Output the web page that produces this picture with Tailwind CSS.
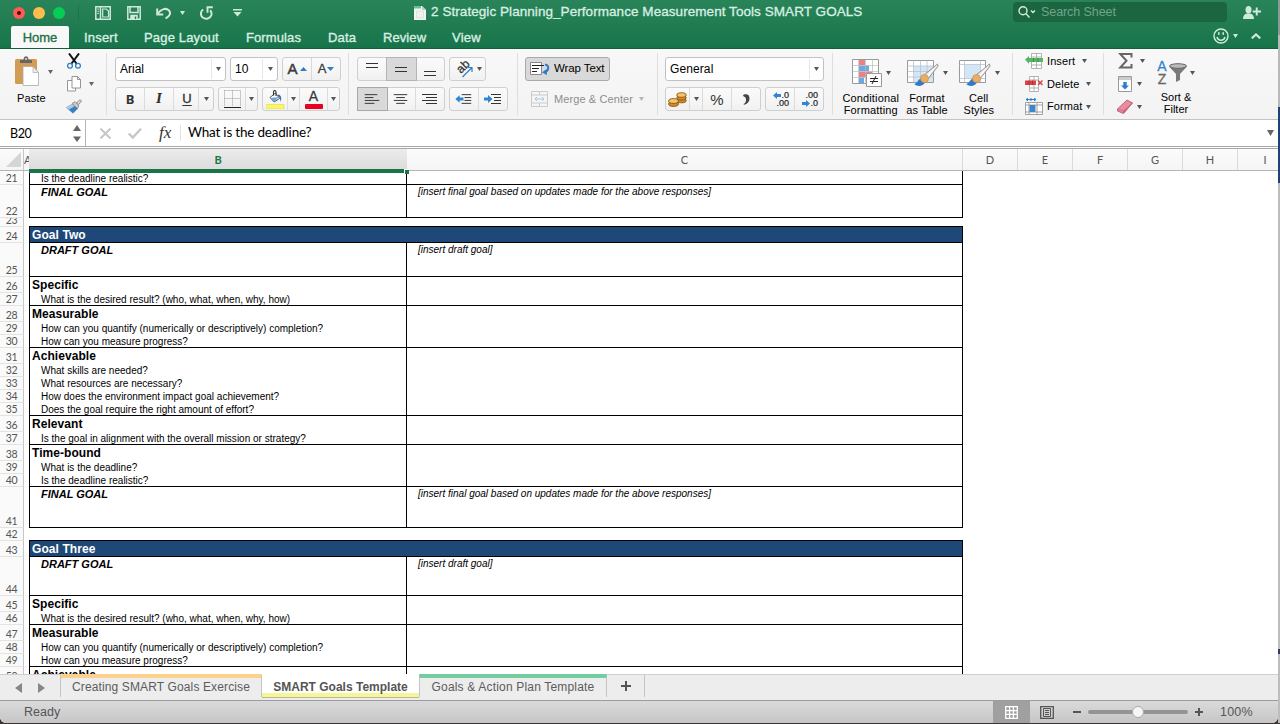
<!DOCTYPE html>
<html lang="en">
<head>
<meta charset="utf-8">
<title>SMART Goals workbook</title>
<script src="https://cdn.jsdelivr.net/npm/@tailwindcss/browser@4"></script>
</head>
<body class="w-[1280px] h-[724px] overflow-hidden bg-[#3a3434] font-['Liberation_Sans',sans-serif] whitespace-nowrap">
<svg width="0" height="0" class="absolute">
  <symbol id="caret" viewBox="0 0 6 5" preserveAspectRatio="none"><path d="M0 0h6L3 5z"/></symbol>
  <symbol id="brush" viewBox="0 0 26 24">
    <path d="M24.500 1L10.500 12.500l4 4L25 3.200z" fill="#e4e4e4" stroke="#8b8b8b" stroke-width=".9"/>
    <path d="M24.500 1.500L12 14l2 2z" fill="#fafafa"/>
    <path d="M1 21c3 0 3.500-4 6.500-5.500l4.500 4C10 23.500 4.500 24 1 21z" fill="#2e7cc9"/>
    <circle cx="11.500" cy="15.500" r="4" fill="#e9ae66" stroke="#c78a43" stroke-width=".6"/>
  </symbol>
</svg>
<div class="flex w-[1280px] h-[723px]">
<div class="w-[1278px] h-[723px] flex flex-col bg-white rounded-b-md overflow-hidden">

  <!-- Title bar -->
  <header class="h-[49px] shrink-0 bg-linear-to-b from-[#2a8459] to-[#17744a] border-b border-[#0d6239] flex flex-col text-[#d9efe3]">
    <div class="h-[26px] flex items-center relative">
      <div class="flex gap-2 pl-[13px] w-[79px] box-border border-r border-[#217249] h-4 items-center">
        <span class="size-3 rounded-full bg-[#fc5b57] shrink-0 flex items-center justify-center"><i class="size-1 rounded-full bg-[#5a0505]"></i></span>
        <span class="size-3 rounded-full bg-[#fdbc4b] shrink-0"></span>
        <span class="size-3 rounded-full bg-[#05cd54] shrink-0"></span>
      </div>
      <svg class="ml-4 w-4 h-[14px]" viewBox="0 0 16 14" fill="none" stroke="#cfe9db" stroke-width="1.500"><path d="M.8.800h14.400v12.400H.800zM5.500 1v12"/><path d="M2.300 3h1.700M2.300 5.200h1.700M2.300 7.400h1.700" stroke-width="1"/><path d="M7.700 11V3h3.500L13.500 5v6z" stroke-width="1.200"/></svg>
      <svg class="ml-4 w-[14px] h-[14px]" viewBox="0 0 14 14" fill="none" stroke="#cfe9db" stroke-width="1.500"><path d="M.8.800h12.400v12.400H.800zM3 1v5.500h8V1"/><path d="M4 13V9.500h6V13" fill="#cfe9db"/><path d="M8.500 10.500V13" stroke="#25794f" stroke-width="1.300"/></svg>
      <svg class="ml-[15px] w-4 h-3" viewBox="0 0 16 12" fill="none" stroke="#cfe9db" stroke-width="2"><path d="M1.200 1.500v6h6"/><path d="M1.500 7C5.500 1.500 10 .8 12.800 3.200 15.500 6 13.500 9.500 9.500 11.500"/></svg>
      <svg class="ml-2 w-[5px] h-1 fill-[#cfe9db]"><use href="#caret"/></svg>
      <svg class="ml-[15px] w-[13px] h-[14px]" viewBox="0 0 13 14" fill="none" stroke="#cfe9db" stroke-width="2"><path d="M3.200 3.500C.2 5.300.3 9.500 2.700 11.500c3 2.300 7.600 1.200 8.700-2.500.4-1.800 0-3.400-1.200-4.700"/><path d="M12.800 1.200H7.500v5.500" stroke-width="1.900"/></svg>
      <svg class="ml-5 w-[9px] h-[8px] fill-[#cfe9db]" viewBox="0 0 9 8"><path d="M0 0h9v1.500H0zM.5 3h8L4.500 7.500z"/></svg>
      <svg class="ml-[172px] w-3 h-[14px]" viewBox="0 0 12 14"><path d="M0 0h8l4 4v10H0z" fill="#f3f8f5"/><path d="M0 0h7v2.500H0z" fill="#63c394"/><path d="M2.500 5h7v7h-7z" stroke="#d5ddd8" stroke-width=".7" fill="#eef2f0"/><path d="M8 0v4h4z" fill="#b9cdc2"/></svg>
      <h1 class="ml-[5px] w-[435px] text-[13.500px] tracking-[0.060px] [-webkit-text-stroke:0.300px]">2 Strategic Planning_Performance Measurement Tools SMART GOALS</h1>
      <div class="ml-[147px] mt-[-1px] w-[214px] h-5 rounded bg-[#1c6541] flex items-center">
        <svg class="ml-[5px] w-[18px] h-3" viewBox="0 0 18 12" fill="none" stroke="#d7ecdf" stroke-width="1.400"><circle cx="5" cy="4.800" r="4"/><path d="M8 7.800l3.500 3.700M13 4.500l2 2 2-2"/></svg>
        <span class="ml-[5px] mt-px text-[12.500px] tracking-[-0.080px] text-[#6fa58a]">Search Sheet</span>
      </div>
      <svg class="ml-4 w-[18px] h-[13px]" viewBox="0 0 18 13" fill="#cfe9db"><ellipse cx="5.500" cy="3.700" rx="3" ry="3.700"/><path d="M0 13c0-3.500 1.500-5 4-5.500h3c2.500.5 4 2 4 5.500zM12.800 1.500h1.900v3H18v1.900h-3.300v3h-1.900v-3H9.800V4.500h3z"/></svg>
    </div>
    <nav class="h-[23px] flex text-[13px] items-center leading-[22px] pt-px [-webkit-text-stroke:0.350px]">
      <span class="ml-[11px] w-[58px] h-[22px] flex items-center justify-center bg-[#f8f8f8] text-[#1c7045] rounded-t-xs pt-px">Home</span>
      <span class="ml-[15px] w-[60px] pt-[2px] tracking-[0.200px]">Insert</span>
      <span class="w-[102px] pt-[2px] tracking-[0.170px]">Page Layout</span>
      <span class="w-[82px] pt-[2px] tracking-[0.100px]">Formulas</span>
      <span class="w-[55px] pt-[2px] tracking-[0.150px]">Data</span>
      <span class="w-[69px] pt-[2px] tracking-[0.080px]">Review</span>
      <span class="w-[54px] pt-[2px] tracking-[0.200px]">View</span>
      <svg class="ml-[707px] -mt-[3px] w-4 h-4" viewBox="0 0 16 16" fill="none" stroke="#d3ebdd" stroke-width="1.400"><circle cx="8" cy="8" r="7"/><path d="M4 9c1 4.300 7 4.300 8 0"/><path d="M5.800 4.300v2.500M10.200 4.300v2.500" stroke-width="1.600"/></svg>
      <svg class="ml-1 -mt-[3px] w-[5px] h-1 fill-[#cfe9db]"><use href="#caret"/></svg>
      <svg class="ml-[13px] -mt-[3px] w-[10px] h-[6px]" viewBox="0 0 10 6" fill="none" stroke="#cfe9db" stroke-width="2.200"><path d="M.8 5.300L5 1.500l4.200 3.800"/></svg>
    </nav>
  </header>

  <!-- Ribbon -->
  <section class="h-[71px] shrink-0 flex bg-linear-to-b from-[#f8f8f8] to-[#f3f3f3] border-b border-[#c3c3c3] text-[11px] text-black">
    <div class="w-[106px] flex shrink-0">
      <div class="w-[64px] flex flex-col">
        <div class="flex items-center mt-[7px] pl-[15px]">
          <svg class="w-6 h-[30px] shrink-0" viewBox="0 0 24 30"><rect y="3" width="22" height="25" rx="1.500" fill="#d39c55"/><path d="M5 7V4h3.500C8.500 1 10 .3 11 .3S13.500 1 13.500 4H17v3z" fill="#666"/><circle cx="11" cy="3" r="1" fill="#ddd"/><path d="M8 10.500h10l5.500 6V29.500H8z" fill="#fff" stroke="#aaa" stroke-width=".8"/><path d="M18 10.500v6h5.500z" fill="#eee" stroke="#aaa" stroke-width=".7"/></svg>
          <svg class="ml-[9px] mt-[2px] w-[5px] h-1 fill-[#666]"><use href="#caret"/></svg>
        </div>
        <span class="mt-[4px] ml-[17px] tracking-[0.100px]">Paste</span>
      </div>
      <div class="flex flex-col pl-[3px]">
        <svg class="mt-[4px] w-[14px] h-4" viewBox="0 0 14 16" fill="none"><path d="M2 .5L9.800 11M12 .5L4.200 11" stroke="#111" stroke-width="2"/><circle cx="3" cy="12.800" r="2.400" stroke="#2f7cc4" stroke-width="1.300"/><circle cx="11" cy="12.800" r="2.400" stroke="#2f7cc4" stroke-width="1.300"/></svg>
        <div class="flex items-center mt-[7px]"><svg class="w-[14px] h-4" viewBox="0 0 14 16" fill="#fff" stroke="#8a8a8a" stroke-width=".9"><path d="M.5 4.500h6l2 2V15h-8z"/><path d="M5 .5h5.500l3 3V12H5zM10.500.5v3h3"/></svg><svg class="ml-2 w-[5px] h-1 fill-[#666]"><use href="#caret"/></svg></div>
        <svg class="mt-[7px] -ml-px w-4 h-[15px]" viewBox="0 0 16 15"><path d="M0 8.500L6 5l6 4.500-5 5z" fill="#3a7fc0"/><path d="M0 8.500L6 5l3 2-6 3.500z" fill="#a9c9e6"/><path d="M6 4.500L9 2.700l4 3.800-1.500 3z" fill="#ccc" stroke="#777" stroke-width=".7"/><path d="M10.500 4L14 .7 15.600 2 12.500 5.500z" fill="#ddd" stroke="#777" stroke-width=".8"/></svg>
      </div>
    </div>
    <div class="w-[242px] my-1 pt-1 pl-2 border-l border-[#dedede] shrink-0 flex flex-col gap-[6px]">
      <div class="flex h-6">
        <div class="w-[111px] border border-[#c2c2c2] rounded-[3px] bg-white flex items-center pl-1 text-[12px]">Arial<span class="ml-auto w-[14px] h-5 border-l border-[#e6e6e6] flex items-center justify-center"><svg class="w-[5px] h-1 fill-[#555]"><use href="#caret"/></svg></span></div>
        <div class="ml-1 w-[48px] border border-[#c2c2c2] rounded-[3px] bg-white flex items-center pl-1 text-[12px]">10<span class="ml-auto w-[15px] h-5 border-l border-[#e6e6e6] flex items-center justify-center"><svg class="w-[5px] h-1 fill-[#555]"><use href="#caret"/></svg></span></div>
        <div class="ml-1 w-[59px] border border-[#cfcfcf] rounded-[3px] bg-linear-to-b from-[#fbfbfb] to-[#f1f1f1] flex divide-x divide-[#d8d8d8] text-[#3b3b3b]">
          <span class="w-[29px] flex items-center justify-center text-[15px] [-webkit-text-stroke:0.500px]">A<svg class="ml-[2px] w-[7px] h-1" viewBox="0 0 7 4"><path d="M0 4h7L3.500 0z" fill="#2f7cc9"/></svg></span>
          <span class="w-[28px] flex items-center justify-center text-[13px] [-webkit-text-stroke:0.300px]">A<svg class="ml-px w-[7px] h-1" viewBox="0 0 7 4"><path d="M0 0h7L3.500 4z" fill="#2f7cc9"/></svg></span>
        </div>
      </div>
      <div class="flex h-6">
        <div class="w-[99px] border border-[#cfcfcf] rounded-[3px] bg-linear-to-b from-[#fbfbfb] to-[#f1f1f1] flex divide-x divide-[#dcdcdc] text-[#333] text-[13px] leading-[22px] text-center">
          <b class="w-[29px] font-['Noto_Sans']">B</b><i class="w-[29px] font-['DejaVu_Serif'] font-bold text-[12px]">I</i><span class="w-[25px] pl-[2px] underline underline-offset-2 [-webkit-text-stroke:0.300px]">U</span><span class="flex-1 flex items-center justify-center"><svg class="w-[5px] h-1 fill-[#555]"><use href="#caret"/></svg></span>
        </div>
        <div class="ml-1 w-[40px] border border-[#cfcfcf] rounded-[3px] bg-linear-to-b from-[#fbfbfb] to-[#f1f1f1] flex divide-x divide-[#dcdcdc]">
          <span class="w-[27px] flex items-center justify-center"><svg class="w-[17px] h-[18px]" viewBox="0 0 17 18" fill="none" stroke="#999" stroke-dasharray="1 1"><path d="M.5.500h16M.5.500v16M16.500.5v16M8.500.5v16M.5 8.500h16"/><path d="M0 17.500h17" stroke="#222" stroke-dasharray="none"/></svg></span><span class="flex-1 flex items-center justify-center"><svg class="w-[5px] h-1 fill-[#555]"><use href="#caret"/></svg></span>
        </div>
        <div class="ml-1 w-[78px] border border-[#cfcfcf] rounded-[3px] bg-linear-to-b from-[#fbfbfb] to-[#f1f1f1] flex divide-x divide-[#dcdcdc]">
          <span class="w-[25px] flex items-center justify-center"><svg class="w-[19px] h-[19px]" viewBox="0 0 19 19"><path d="M0 14.500h18V19H0z" fill="#fbf75e" stroke="#dcd95a" stroke-width=".6"/><path d="M4 7.500L9.500 3l4 5.500L8 12z" fill="#fff" stroke="#555"/><path d="M4 8l9-1L8 12z" fill="#6fa8dc"/><path d="M12 4.500c3 .5 4 3 2.800 7.500C14 8 13.500 7 12 6z" fill="#2f6fb5"/><path d="M7.500 5.500V2c0-2 2.500-2 2.500 0v4" fill="none" stroke="#333" stroke-width="1.100"/></svg></span>
          <span class="w-[12px] flex items-center justify-center"><svg class="w-[5px] h-1 fill-[#555]"><use href="#caret"/></svg></span>
          <span class="w-[28px] flex flex-col items-center justify-center text-[14px] leading-[13px] text-[#3b3b3b] [-webkit-text-stroke:0.300px]">A<i class="w-[18px] h-[5px] bg-[#e8001c] rounded-[1px] mt-px"></i></span>
          <span class="flex-1 flex items-center justify-center"><svg class="w-[5px] h-1 fill-[#555]"><use href="#caret"/></svg></span>
        </div>
      </div>
    </div>
    <div class="w-[169px] my-1 pt-1 pl-[8px] border-l border-[#dedede] shrink-0 flex flex-col gap-[6px]">
      <div class="flex h-6">
        <div class="w-[88px] border border-[#cfcfcf] rounded-[3px] bg-linear-to-b from-[#fbfbfb] to-[#f1f1f1] flex">
          <svg class="w-[29px] h-[22px]" viewBox="0 0 29 22" stroke="#333"><path d="M8 5.500h12M8 9.500h12"/></svg>
          <svg class="w-[29px] h-[22px] bg-[#d9d9d9] shadow-[0_0_0_1px_#b4b4b4]" viewBox="0 0 29 22" stroke="#333"><path d="M8 9.500h12M8 13.500h12"/></svg>
          <svg class="w-[28px] h-[22px]" viewBox="0 0 28 22" stroke="#333"><path d="M8 13.500h12M8 17.500h12"/></svg>
        </div>
        <div class="ml-1 w-[37px] border border-[#cfcfcf] rounded-[3px] bg-linear-to-b from-[#fbfbfb] to-[#f1f1f1] flex items-center pl-1">
          <svg class="w-5 h-[20px] font-['Liberation_Sans']" viewBox="0 0 20 20"><text x="7" y="15" transform="rotate(-45 7 15)" font-size="12" fill="#333" stroke="#333" stroke-width=".3">ab</text><path d="M8.500 18L18 8.500M13.500 8.500H18V13" stroke="#2f7cc9" stroke-width="1.200" fill="none"/></svg>
          <svg class="ml-[3px] w-[5px] h-1 fill-[#555]"><use href="#caret"/></svg>
        </div>
      </div>
      <div class="flex h-6">
        <div class="w-[88px] border border-[#cfcfcf] rounded-[3px] bg-linear-to-b from-[#fbfbfb] to-[#f1f1f1] flex divide-x divide-[#dcdcdc]">
          <svg class="w-[29px] h-[22px] bg-[#d9d9d9] shadow-[0_0_0_1px_#a8a8a8]" viewBox="0 0 29 22" stroke="#333"><path d="M7 6.500h13M7 9.500h9M7 12.500h15M7 15.500h10"/></svg>
          <svg class="w-[29px] h-[22px]" viewBox="0 0 29 22" stroke="#333"><path d="M7 6.500h14M9.500 9.500h9M7 12.500h14M9.500 15.500h9"/></svg>
          <svg class="w-[28px] h-[22px]" viewBox="0 0 28 22" stroke="#333"><path d="M6 6.500h15M10 9.500h11M6 12.500h15M10 15.500h11"/></svg>
        </div>
        <div class="ml-1 w-[59px] border border-[#cfcfcf] rounded-[3px] bg-linear-to-b from-[#fbfbfb] to-[#f1f1f1] flex divide-x divide-[#dcdcdc]">
          <svg class="w-[29px] h-[22px]" viewBox="0 0 29 22" stroke="#333"><path d="M12 6.500h10M15 9.500h7M15 12.500h7M12 15.500h10"/><path d="M5.500 11l4.500-4v2.500h4v3h-4V15z" fill="#2f86d3" stroke="none"/></svg>
          <svg class="w-[28px] h-[22px]" viewBox="0 0 28 22" stroke="#333"><path d="M12 6.500h10M15 9.500h7M15 12.500h7M12 15.500h10"/><path d="M13.500 11L9 7v2.500H5v3h4V15z" fill="#2f86d3" stroke="none"/></svg>
        </div>
      </div>
    </div>
    <div class="w-[140px] my-1 pt-1 pl-[7px] border-l border-[#dedede] shrink-0 flex flex-col gap-[6px]">
      <div class="w-[85px] h-6 border border-[#a9a9a9] rounded-[3px] bg-[#d9d9d9] flex items-center pl-1 text-[11.500px] tracking-[-0.100px]">
        <svg class="w-[20px] h-[14px] shrink-0 mr-1" viewBox="0 0 20 14" fill="none"><path d="M.5.500h11v12H.500z" fill="#fff" stroke="#888"/><path d="M2 3.500h12M2 6.500h7M2 9.500h5" stroke="#222"/><path d="M15 2.500c4 .5 4.500 5 .5 7.500" stroke="#2f7cc9" stroke-width="2"/><path d="M12 10.500l4.500-3.500.5 6z" fill="#2f7cc9"/></svg>Wrap Text</div>
      <div class="h-6 flex items-center pl-[6px] text-[#8d8d8d] tracking-[0.100px]">
        <svg class="w-[17px] h-[16px] shrink-0 mr-[6px]" viewBox="0 0 17 16" fill="none" stroke="#cbcbcb"><path d="M.5.500h16v15H.500zM.5 4h16M.5 12h16M8.500.5V4M8.500 12v3.500"/><path d="M4 8h9M6 6L4 8l2 2M11 6l2 2-2 2" stroke="#a6c7e4"/></svg>Merge &amp; Center<svg class="ml-[6px] w-[5px] h-1 fill-[#b5b5b5]"><use href="#caret"/></svg></div>
    </div>
    <div class="w-[175px] my-1 pt-1 pl-[7px] border-l border-[#dedede] shrink-0 flex flex-col gap-[6px]">
      <div class="w-[159px] h-6 border border-[#c2c2c2] rounded-[3px] bg-white flex items-center pl-1 text-[12px] tracking-[0.100px]">General<span class="ml-auto w-[14px] h-5 border-l border-[#e6e6e6] flex items-center justify-center"><svg class="w-[5px] h-1 fill-[#555]"><use href="#caret"/></svg></span></div>
      <div class="flex h-6">
        <div class="w-[96px] border border-[#cfcfcf] rounded-[3px] bg-linear-to-b from-[#fbfbfb] to-[#f1f1f1] flex divide-x divide-[#dcdcdc]">
          <span class="w-[24px] flex items-center justify-center"><svg class="w-[19px] h-[15px]" viewBox="0 0 19 15" stroke="#7b4a0b" stroke-width=".8"><g fill="#d48a25"><ellipse cx="13.500" cy="8.500" rx="4.700" ry="2.300"/><ellipse cx="13.500" cy="5.800" rx="4.700" ry="2.300"/><ellipse cx="13.500" cy="3" rx="4.700" ry="2.300" fill="#f3c568"/><ellipse cx="5.500" cy="12" rx="4.900" ry="2.400"/><ellipse cx="5.500" cy="9" rx="4.900" ry="2.400" fill="#f3c568"/></g></svg></span>
          <span class="w-[13px] flex items-center justify-center"><svg class="w-[5px] h-1 fill-[#555]"><use href="#caret"/></svg></span>
          <span class="w-[29px] text-center text-[15px] leading-[23px] text-[#333]">%</span>
          <svg class="w-[28px] h-[22px]" viewBox="0 0 28 22" fill="#444"><path d="M11.500 6.800c3.800-1.300 6 .4 6 3.700s-2 5.600-5.500 6.300c-.5-.5-.4-.8 0-1 1.300-.7 2-1.900 2-3.800 0-2.200-.6-3.200-2.200-3.600-.8-.3-.9-1.200-.3-1.600z"/></svg>
        </div>
        <div class="ml-1 w-[59px] border border-[#cfcfcf] rounded-[3px] bg-linear-to-b from-[#fbfbfb] to-[#f1f1f1] flex divide-x divide-[#dcdcdc] text-[9px] leading-[8px] text-[#222]">
          <span class="w-[29px] flex flex-col items-end pr-[5px] pt-[3px] [-webkit-text-stroke:0.200px]"><span class="flex items-center"><svg class="w-2 h-[7px]" viewBox="0 0 8 7"><path d="M0 3.500L4 0v2h4v3H4v2z" fill="#2f86d3"/></svg>.0</span><span>.00</span></span>
          <span class="w-[28px] flex flex-col items-end pr-[5px] pt-[3px] [-webkit-text-stroke:0.200px]"><span>.00</span><span class="flex items-center"><svg class="w-2 h-[7px]" viewBox="0 0 8 7"><path d="M8 3.500L4 0v2H0v3h4v2z" fill="#2f86d3"/></svg>.0</span></span>
        </div>
      </div>
    </div>
    <div class="w-[180px] my-1 border-l border-[#dedede] shrink-0 flex text-center leading-[12px]">
      <div class="w-[76px] flex flex-col items-center">
        <div class="flex items-center mt-[6px] ml-[1px]"><svg class="w-[30px] h-7" viewBox="0 0 30 28"><path d="M.5.500h26v24H.500z" fill="#fff" stroke="#999"/><path d="M7 1h6v5H7z" fill="#ee7f82"/><path d="M7 6.500h10V12H7zM7 18.500h5V24H7z" fill="#6aaae4"/><path d="M7 12.500h13V18H7z" fill="#ee7f82"/><path d="M6.500.5v24M.5 6.500h26M.5 12.500h26M.5 18.500h26M13.500.5v24M20.500.5v24" stroke="#bbb" fill="none" stroke-width=".7"/><path d="M14.500 14.500h15v13h-15z" fill="#fff" stroke="#999"/><path d="M18 19.500h8M18 22.500h8M24 17l-4 8" stroke="#222"/></svg><svg class="ml-1 w-[5px] h-1 fill-[#555]"><use href="#caret"/></svg></div>
        <div class="mt-[5px] tracking-[0.150px]">Conditional<br>Formatting</div>
      </div>
      <div class="w-[37px] flex flex-col items-center">
        <div class="flex items-center mt-[6px] ml-[1px]"><svg class="w-8 h-7 shrink-0" viewBox="0 0 32 28"><path d="M.5 1.500h26v22H.500z" fill="#fff" stroke="#999"/><path d="M7 7h19v16H7z" fill="#d3e6f6"/><path d="M6.500 1.500v22M13.500 1.500v22M20 1.500v22M.5 7h26M.5 12.500h26M.5 18h26" stroke="#b9c3cc" fill="none" stroke-width=".8"/><use href="#brush" x="6" y="4" width="26" height="24"/></svg><svg class="ml-1 w-[5px] h-1 shrink-0 fill-[#555]"><use href="#caret"/></svg></div>
        <div class="mt-[5px] tracking-[0.100px]">Format<br>as Table</div>
      </div>
      <div class="w-[67px] flex flex-col items-center">
        <div class="flex items-center mt-[6px] ml-[2px]"><svg class="w-8 h-7 shrink-0" viewBox="0 0 32 28"><path d="M.5 1.500h26v22H.500z" fill="#fff" stroke="#999"/><path d="M6 6h15v13H6z" fill="#d3e6f6"/><path d="M5.500 1.500v22M21.500 1.500v22M.5 5.500h26M.5 19.500h26" stroke="#b9c3cc" fill="none" stroke-width=".8"/><use href="#brush" x="6" y="4" width="26" height="24"/></svg><svg class="ml-1 w-[5px] h-1 shrink-0 fill-[#555]"><use href="#caret"/></svg></div>
        <div class="mt-[5px] tracking-[0.100px]">Cell<br>Styles</div>
      </div>
    </div>
    <div class="w-[91px] my-1 pl-[12px] border-l border-[#dedede] shrink-0 flex flex-col tracking-[0.100px]">
      <div class="flex items-center h-[17px]"><svg class="w-[18px] h-4 mr-1" viewBox="0 0 18 16"><path d="M6.500.500h10v15h-10zM11.500.5v15M6.500 4h10M6.500 12h10" fill="#fff" stroke="#aaa" stroke-width=".9"/><path d="M0 6.500L4 3v2h14v4H4v2z" fill="#58b567"/><path d="M8.500 5v4M13 5v4" stroke="#2f8540" stroke-width=".8"/></svg>Insert<svg class="ml-[7px] w-[5px] h-1 fill-[#555]"><use href="#caret"/></svg></div>
      <div class="flex items-center h-[17px] mt-[6px]"><svg class="w-[18px] h-4 mr-1" viewBox="0 0 18 16"><path d="M4.500.500h9v15h-9zM9 .5v15M4.500 4h9M4.500 12h9" fill="#fff" stroke="#aaa" stroke-width=".9"/><path d="M0 4.500h11v4.500H0z" fill="#d9434a"/><path d="M4 4.500V9M7.500 4.500V9" stroke="#a52a30" stroke-width=".8"/><path d="M13 4.500l4.500 4.500M17.500 4.500L13 9" stroke="#d9434a" stroke-width="1.500"/></svg>Delete<svg class="ml-[7px] w-[5px] h-1 fill-[#555]"><use href="#caret"/></svg></div>
      <div class="flex items-center h-[17px] mt-[6px]"><svg class="w-[18px] h-[17px] mr-1" viewBox="0 0 18 17"><path d="M1 1.500h10M3 0L1 1.500 3 3M9 0l2 1.500L9 3M6 0v3" stroke="#2f7cc9" fill="none"/><path d="M.5 4.500h17v12H.500zM4 4.500v12M12 4.500v12M.5 7h17M.5 14h17" fill="#fff" stroke="#999" stroke-width=".9"/><path d="M4.500 7h6v7h-6z" fill="#3e86c7"/></svg>Format<svg class="ml-[4px] w-[5px] h-1 fill-[#555]"><use href="#caret"/></svg></div>
    </div>
    <div class="flex-1 my-1 pl-[14px] border-l border-[#dedede] flex">
      <div class="w-[36px] flex flex-col">
        <div class="flex items-center h-[17px]"><svg class="w-[15px] h-4" viewBox="0 0 15 16"><path d="M13.500 4.500V1H2.200L8.500 7.700 2.200 14.500h11.300V11" fill="none" stroke="#666" stroke-width="2"/></svg><svg class="ml-[7px] w-[5px] h-1 fill-[#555]"><use href="#caret"/></svg></div>
        <div class="flex items-center h-[17px] mt-[6px]"><svg class="w-[14px] h-4" viewBox="0 0 14 16"><path d="M.5.500h13v15H.500z" fill="#fff" stroke="#999"/><path d="M1 1h12v3H1z" fill="#ccc"/><path d="M7 13.500L3 9.500h2.300V6h3.400v3.500H11z" fill="#2f7cc9"/></svg><svg class="ml-[5px] w-[5px] h-1 fill-[#555]"><use href="#caret"/></svg></div>
        <div class="flex items-center h-[17px] mt-[6px]"><svg class="w-4 h-4 -ml-px" viewBox="0 0 16 16"><path d="M.5 10L10 1l5.500 3L6.500 14.500.5 12z" fill="#ea8ba0" stroke="#b75a70" stroke-width=".9"/><path d="M.5 10l6 2L15.500 4M6.500 12v2.500" fill="none" stroke="#c56b80" stroke-width=".8"/><path d="M6.500 12L15 4.500 6.500 14.500z" fill="#cf5e79"/></svg><svg class="ml-1 w-[5px] h-1 fill-[#555]"><use href="#caret"/></svg></div>
      </div>
      <div class="w-[44px] flex flex-col items-center leading-[12px] text-center">
        <div class="flex items-center mt-[7px] h-[27px]"><span class="flex flex-col text-[14px] leading-[13px] text-[#666] [-webkit-text-stroke:0.300px] mr-[2px] w-[10px] items-center"><span class="text-[#3284d0]">A</span><span>Z</span></span><svg class="w-[18px] h-5" viewBox="0 0 18 20"><path d="M0 3.500L7 11v8l4-2v-6l7-7.500z" fill="#7a7a7a"/><ellipse cx="9" cy="3" rx="8.500" ry="2.300" fill="#bbb" stroke="#666"/></svg><svg class="ml-[3px] w-[5px] h-1 fill-[#555]"><use href="#caret"/></svg></div>
        <div class="mt-[5px]">Sort &amp;<br>Filter</div>
      </div>
    </div>
  </section>

  <!-- Formula bar -->
  <section class="h-[29px] shrink-0 flex items-center border-b-[3px] border-double border-[#a8a8a8] bg-white text-black">
    <div class="w-[86px] h-[26px] flex items-center border-r border-[#b5b5b5] pl-[10px] font-[Lato] text-[12.500px]"><span class="pt-[3px] tracking-[-0.400px]">B20</span>
      <svg class="ml-auto mr-1 w-2 h-[17px]" viewBox="0 0 8 17" fill="#666"><path d="M0 6h8L4 0zM0 11.500h8l-4 5.500z"/></svg></div>
    <svg class="ml-[14px] w-[11px] h-[11px]" viewBox="0 0 11 11" stroke="#c6c6c6" stroke-width="2"><path d="M.5.500l10 10M10.500.500l-10 10"/></svg>
    <svg class="ml-[17px] w-[14px] h-[11px]" viewBox="0 0 14 11" fill="none" stroke="#c6c6c6" stroke-width="2.400"><path d="M.8 5.500l4 4L13 .8"/></svg>
    <i class="ml-[17px] w-[22px] h-4 leading-4 font-['Liberation_Serif'] text-[17px] text-[#333] border-r border-[#e2e2e2]">fx</i>
    <span class="ml-[7px] font-[Lato] text-[13.500px] tracking-[-0.200px] pb-[1px]">What is the deadline?</span>
    <svg class="ml-auto mr-1 w-[7px] h-[6px] fill-[#666]"><use href="#caret"/></svg>
  </section>

  <!-- Column headers -->
  <div class="h-[22px] shrink-0 flex border-b border-[#b4b4b4] bg-linear-to-b from-[#fbfbfb] to-[#f5f5f5] font-[Lato] text-[11px] leading-[22px] text-center text-[#555]">
    <div class="w-6 border-r border-[#c6c6c6] flex items-end justify-end pb-[3px] pr-[2px]"><svg class="w-[15px] h-[15px]"><path d="M15 0v15H0z" fill="#d5d5d5"/></svg></div>
    <div class="w-[5px] overflow-hidden">A</div>
    <div class="w-[378px] bg-linear-to-b from-[#ececec] to-[#dcdcdc] border-b-4 border-[#1b7448] h-[24px] relative font-bold text-[#1b7448]">B<i class="absolute -right-[2px] top-[20px] w-[5px] h-[5px] bg-[#1b7448] border-l border-t border-white"></i></div>
    <div class="w-[556px] border-r border-[#dadada]">C</div>
    <div class="w-[55px] border-r border-[#dadada]">D</div>
    <div class="w-[55px] border-r border-[#dadada]">E</div>
    <div class="w-[55px] border-r border-[#dadada]">F</div>
    <div class="w-[55px] border-r border-[#dadada]">G</div>
    <div class="w-[55px] border-r border-[#dadada]">H</div>
    <div class="flex-1 pl-[14px]">I</div>
  </div>

  <!-- Sheet grid -->
  <main id="sheet" class="h-[503px] shrink-0 overflow-hidden"></main>

  <!-- Sheet tabs -->
  <footer class="h-[27px] shrink-0 flex bg-[#ededed] border-b border-[#9c9c9c] text-[12px] text-[#5c5c5c]">
    <div class="w-[60px] h-[26px] flex items-center pl-[15px] gap-[16px] border-t border-[#cfcfcf]">
      <svg class="w-[7px] h-[10px]" viewBox="0 0 7 10"><path d="M7 0v10L0 5z" fill="#868686"/></svg>
      <svg class="w-[7px] h-[10px]" viewBox="0 0 7 10"><path d="M0 0v10l7-5z" fill="#868686"/></svg>
    </div>
    <div class="w-[202px] h-[23px] border-t-4 border-t-[#fbd18b] border-x border-x-[#c4c4c4] text-center leading-[18px] tracking-[0.130px]">Creating SMART Goals Exercise</div>
    <div class="w-[157px] h-[23px] bg-white border-b-4 border-[#f5f59b] shadow-[0_1px_0_#b9b98c] text-center leading-[26px] font-bold text-[#555]">SMART Goals Template</div>
    <div class="w-[188px] h-[23px] border-t-4 border-t-[#74cda0] border-x border-x-[#c4c4c4] text-center leading-[18px] tracking-[0.180px]">Goals &amp; Action Plan Template</div>
    <div class="w-[38px] h-[23px] border-t border-t-[#cfcfcf] border-r border-r-[#c4c4c4] flex items-center justify-center"><svg class="w-[10px] h-[10px]" viewBox="0 0 10 10"><path d="M4 0h2v4h4v2H6v4H4V6H0V4h4z" fill="#555"/></svg></div>
    <div class="flex-1 border-t border-[#cfcfcf]"></div>
  </footer>

  <!-- Status bar -->
  <div class="flex-1 flex items-center bg-linear-to-b from-[#dadada] to-[#c6c6c6] text-[12px] text-[#555]">
    <span class="ml-6 text-[12.500px]">Ready</span>
    <div class="ml-auto w-[37px] h-full bg-[#a0a0a0] flex items-center justify-center"><svg class="w-[13px] h-[13px]" viewBox="0 0 13 13"><path d="M.7.700h11.600v11.600H.700zM4.600 1v11M8.400 1v11M1 4.600h11M1 8.400h11" fill="none" stroke="#fff" stroke-width="1.300"/></svg></div>
    <svg class="ml-[10px] w-[14px] h-[13px]" viewBox="0 0 14 13" fill="none" stroke="#555"><path d="M.7.700h12.600v11.600H.700z" stroke-width="1.300"/><path d="M3.500 2.500h7v8h-7zM5 4.500h4M5 6.500h4M5 8.500h4"/></svg>
    <i class="ml-[19px] w-2 h-[2px] bg-[#555]"></i>
    <div class="ml-[7px] w-[100px] h-1 rounded-full bg-[#949494] flex items-center justify-center"><i class="size-3 rounded-full bg-[#f6f6f6] border border-[#aaa]"></i></div>
    <svg class="ml-[7px] w-2 h-2" viewBox="0 0 8 8"><path d="M3 0h2v3h3v2H5v3H3V5H0V3h3z" fill="#555"/></svg>
    <span class="ml-[17px] w-[58px] text-[12.500px] tracking-[0.200px]">100%</span>
  </div>
</div>
<!-- Desktop behind the window edge -->
<div class="w-[2px] h-[723px] flex flex-col"><i class="h-[35px] bg-[#8e9a94]"></i><i class="h-[72px] bg-[#b9b9b9]"></i><i class="h-[76px] bg-[#1f4273]"></i><i class="h-[466px] bg-[#bdbdbd]"></i><i class="h-[5px] bg-[#2c3e63]"></i><i class="h-[69px] bg-[#bdbdbd]"></i></div>
</div>
<script>
// [row number, height, kind, label, ruled bottom edge]
const rows = [
  [21,14,'first','Is the deadline realistic?',1],[22,33,'final','FINAL GOAL',1],[23,9,'gap','',1],
  [24,16,'title','Goal Two',1],[25,34,'draft','DRAFT GOAL',1],
  [26,16,'h','Specific',0],[27,13,'q','What is the desired result? (who, what, when, why, how)',1],
  [28,16,'h','Measurable',0],[29,13,'q','How can you quantify (numerically or descriptively) completion?',0],[30,13,'q','How can you measure progress?',1],
  [31,16,'h','Achievable',0],[32,13,'q','What skills are needed?',0],[33,13,'q','What resources are necessary?',0],[34,13,'q','How does the environment impact goal achievement?',0],[35,13,'q','Does the goal require the right amount of effort?',1],
  [36,16,'h','Relevant',0],[37,13,'q','Is the goal in alignment with the overall mission or strategy?',1],
  [38,16,'h','Time-bound',0],[39,13,'q','What is the deadline?',0],[40,13,'q','Is the deadline realistic?',1],[41,41,'final','FINAL GOAL',1],
  [42,13,'gap','',1],[43,16,'title','Goal Three',1],[44,39,'draft','DRAFT GOAL',1],
  [45,16,'h','Specific',0],[46,13,'q','What is the desired result? (who, what, when, why, how)',1],
  [47,16,'h','Measurable',0],[48,13,'q','How can you quantify (numerically or descriptively) completion?',0],[49,13,'q','How can you measure progress?',1],
  [50,16,'h','Achievable',0]
];
const labelStyle = {
  q: 'pl-[11px] text-[10px] leading-[13px] tracking-[0.005px]',
  first: 'pl-[11px] pt-px text-[10px] leading-[13px] tracking-[0.005px]',
  h: 'pl-[2px] text-[12px] leading-[16px] font-bold tracking-[0.050px]',
  final: 'pl-[11px] text-[11px] leading-[14px] font-bold italic',
  draft: 'pl-[11px] text-[11px] leading-[14px] font-bold italic',
  title: 'pl-[2px] text-[12px] leading-[17px] font-bold text-white tracking-[0.080px]',
  gap: ''
};
const notes = { final: '[insert final goal based on updates made for the above responses]', draft: '[insert draft goal]' };
document.getElementById('sheet').innerHTML = rows.map(([n, h, kind, label, ruled]) => {
  const edge = ruled ? ' border-b' : '';
  const cells = kind === 'gap'
    ? '<div class="w-[934px] border-b border-black"></div>'
    : kind === 'title'
    ? `<div class="w-[934px] border-x border-b border-black bg-[#1e4878]"><div class="${labelStyle.title}">${label}</div></div>`
    : `<div class="w-[378px] flex items-start border-x border-black${edge}"><div class="${labelStyle[kind]}">${label}</div></div>
       <div class="w-[556px] border-r border-black${edge} pl-[11px] text-[10px] leading-[14px] italic">${notes[kind] || ''}</div>`;
  return `<div class="flex" style="height:${h}px"><div class="w-6 mr-[5px] shrink-0 border-r border-b border-r-[#c6c6c6] border-b-[#e3e3e3] bg-[#fafafa] flex items-end justify-center overflow-hidden font-[Lato] text-[10.500px] leading-[12px] tracking-[-0.400px] text-[#555]">${n}</div>${cells}</div>`;
}).join('');
</script>
</body>
</html>
